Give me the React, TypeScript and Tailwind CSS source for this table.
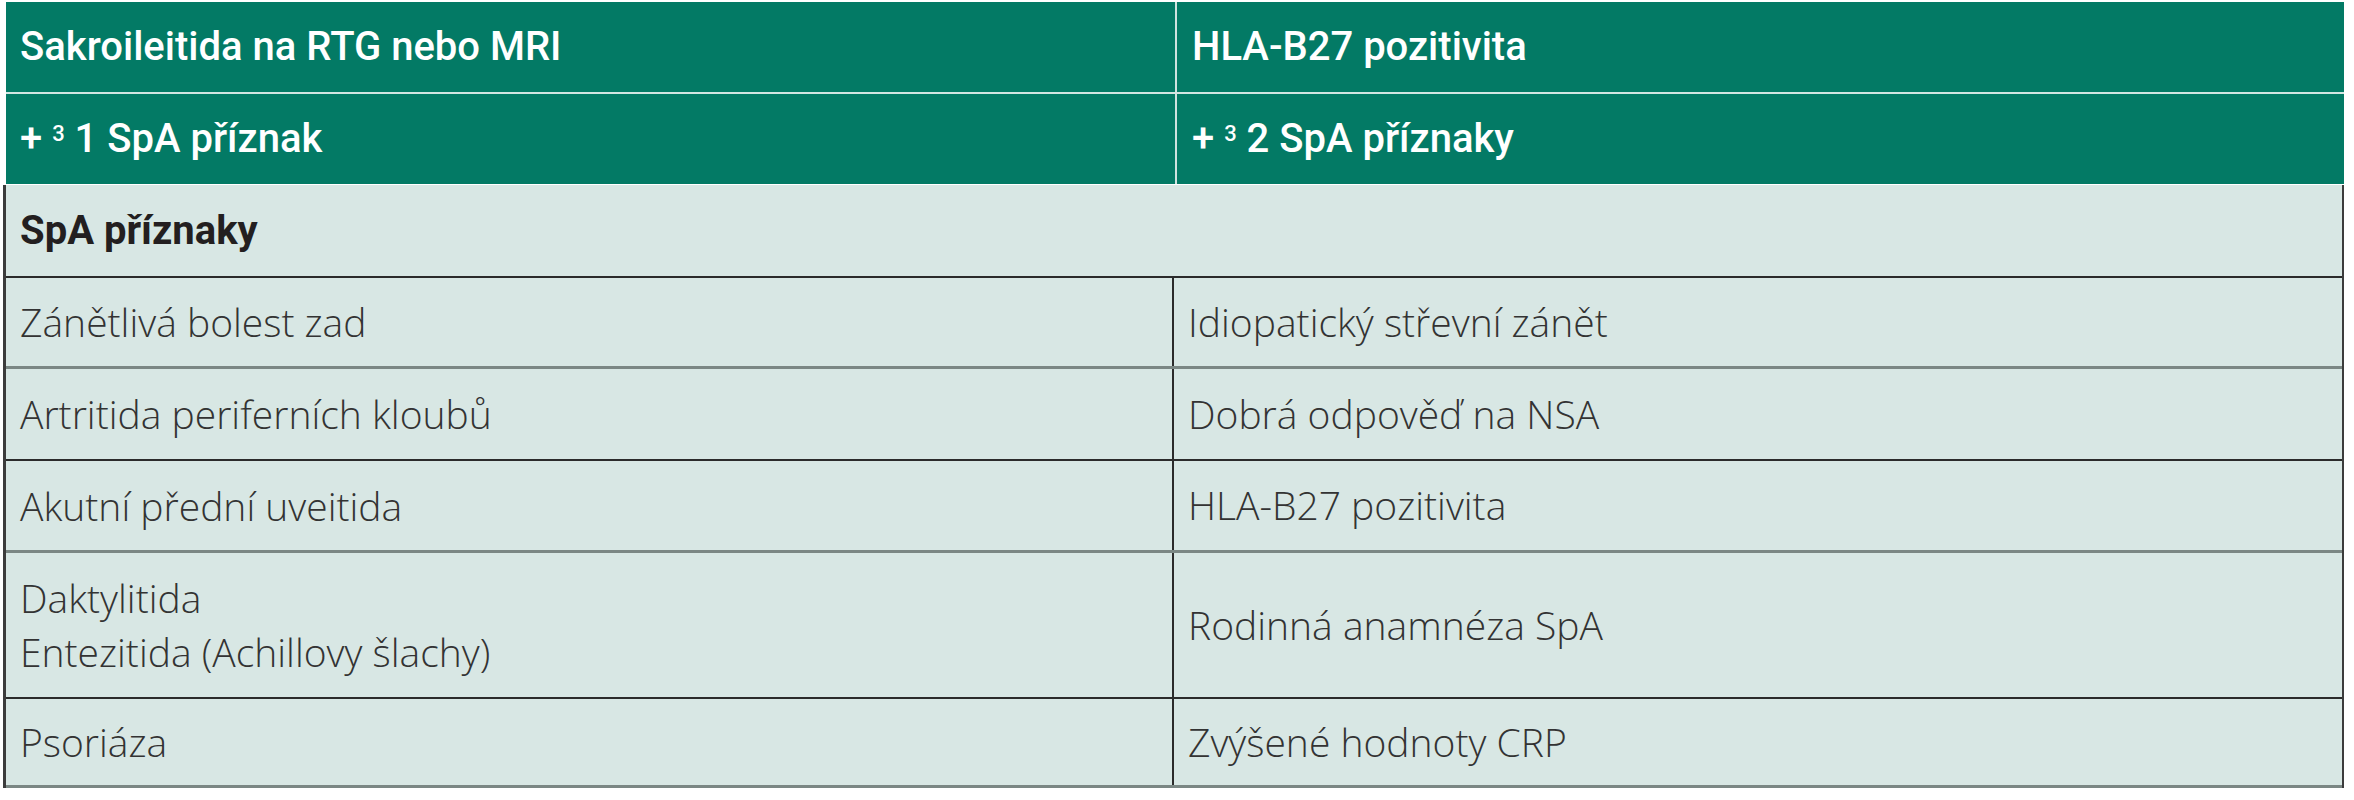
const heading = "font-['Roboto',_'Liberation_Sans',_sans-serif]";
const body = "font-['Open_Sans',_'Liberation_Sans',_sans-serif]";

type Row = { left: string[]; right: string; h: string; line: string };

const rows: Row[] = [
  { left: ["Zánětlivá bolest zad"], right: "Idiopatický střevní zánět", h: "h-[91px]", line: "border-b-[3px] border-[#7b8784]" },
  { left: ["Artritida periferních kloubů"], right: "Dobrá odpověď na NSA", h: "h-[92px]", line: "border-b-2 border-[#2b2b2b]" },
  { left: ["Akutní přední uveitida"], right: "HLA-B27 pozitivita", h: "h-[92px]", line: "border-b-[3px] border-[#7b8784]" },
  { left: ["Daktylitida", "Entezitida (Achillovy šlachy)"], right: "Rodinná anamnéza SpA", h: "h-[146px]", line: "border-b-2 border-[#2b2b2b]" },
  { left: ["Psoriáza"], right: "Zvýšené hodnoty CRP", h: "h-[89px]", line: "border-b-[3px] border-[#7b8784]" },
];

function HeadRow({ left, right }: { left: React.ReactNode; right: React.ReactNode }) {
  return (
    <div className={`flex h-[90px] text-[40px] font-medium text-white ${heading}`}>
      <div className="flex w-[1169px] items-center bg-[#037a65] pl-[14px]">{left}</div>
      <div className="flex flex-1 items-center border-l-2 border-[#cfe3df] bg-[#037a65] pl-[15px]">{right}</div>
    </div>
  );
}

export default function App() {
  return (
    <div className="h-[800px] w-[2354px] bg-white pl-[6px] pt-[2px]">
      <div className="w-[2338px]">
        <div className="flex flex-col gap-[2px] bg-[#d3e6e2]">
          <HeadRow left="Sakroileitida na RTG nebo MRI" right="HLA-B27 pozitivita" />
          <HeadRow
            left={
              <span>
                + <sup className="text-[22px]">3</sup> 1 SpA příznak
              </span>
            }
            right={
              <span>
                + <sup className="text-[22px]">3</sup> 2 SpA příznaky
              </span>
            }
          />
        </div>

        <div className="-ml-[3px] mt-px border-l-[3px] border-r-2 border-[#3c3c3c] bg-[#d8e7e4]">
          <div className={`flex h-[93px] items-center border-b-2 border-[#2b2b2b] pl-[14px] text-[40px] font-bold text-[#231f20] ${heading}`}>
            SpA příznaky
          </div>
          {rows.map((r) => (
            <div key={r.right} className={`flex ${r.h} ${r.line} text-[39px] font-light text-[#333] ${body}`}>
              <div className="flex w-[1166px] flex-col justify-center pl-[14px] leading-[54px]">
                {r.left.map((t) => (
                  <span key={t}>{t}</span>
                ))}
              </div>
              <div className="flex flex-1 items-center border-l-2 border-[#2b2b2b] pl-[14px]">{r.right}</div>
            </div>
          ))}
        </div>
      </div>
    </div>
  );
}
